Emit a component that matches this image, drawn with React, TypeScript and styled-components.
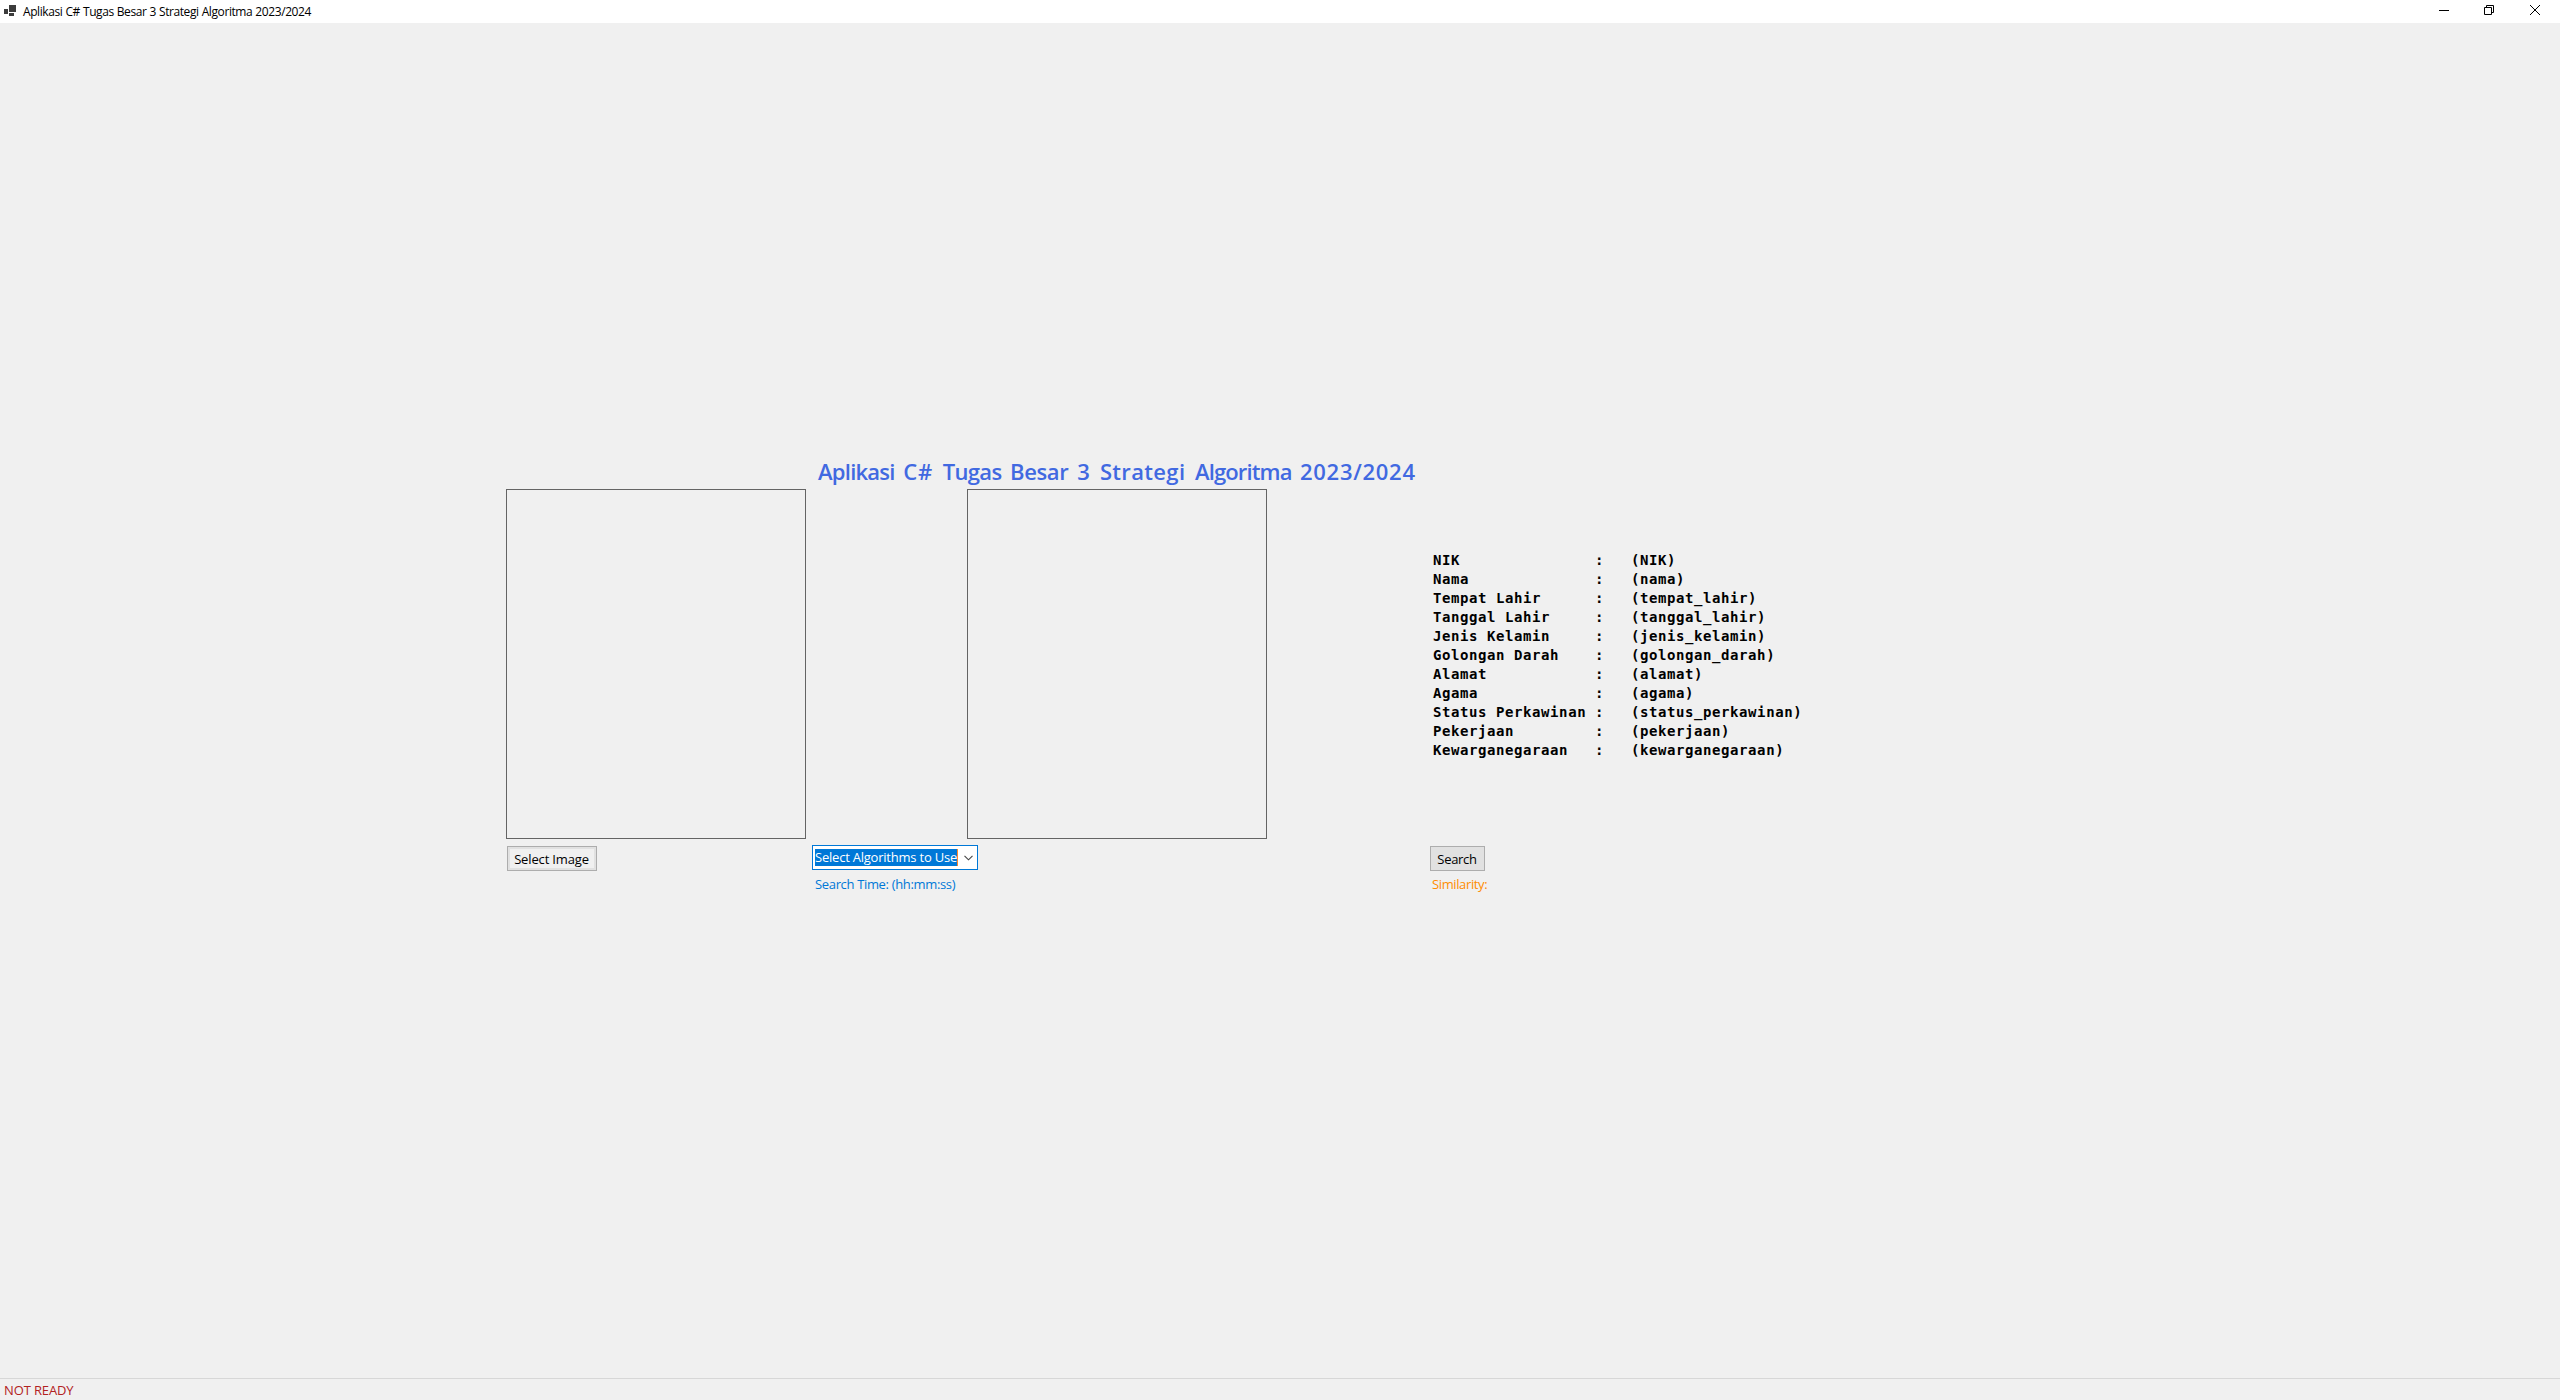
import React from "react";
import styled, { createGlobalStyle } from "styled-components";

const Global = createGlobalStyle`
  * { box-sizing: border-box; }
  html, body { margin: 0; background: #f0f0f0; }
`;

const ui = `"Segoe UI", "Open Sans", "Noto Sans", sans-serif`;

const Window = styled.div`
  display: flex;
  flex-direction: column;
  width: 2560px;
  height: 1400px;
  overflow: hidden;
  background: #f0f0f0;
  font: 13px ${ui};
  color: #000;
  white-space: pre;
`;

const TitleBar = styled.header`
  display: flex;
  align-items: center;
  flex: none;
  height: 23px;
  padding: 0 2px 0 4px;
  background: #fff;
`;

const AppIcon = styled.svg`
  flex: none;
  width: 12px;
  height: 12px;
  margin-top: -1px;
`;

const Caption = styled.span`
  flex: 1;
  margin-left: 7px;
  font-size: 12px;
  line-height: 23px;
  letter-spacing: -0.41px;
  word-spacing: 0.3px;
`;

const WindowButton = styled.button<{ $width?: number }>`
  display: flex;
  align-items: center;
  align-self: flex-start;
  justify-content: center;
  width: ${(p) => p.$width ?? 46}px;
  height: 20px;
  padding: 0;
  border: 0;
  background: none;

  svg {
    display: block;
    width: 10px;
    height: 10px;
  }
`;

const Form = styled.main`
  display: flex;
  flex-direction: column;
  flex: 1;
  padding: 434px 0 0 506px;
`;

const Heading = styled.h1`
  margin: 0 0 0 312px;
  font: 600 22px/29px "Comic Sans MS", "Open Sans", sans-serif;
  word-spacing: 3.6px;
  color: #4169e1;
`;

const Word = styled.span<{ $space: number }>`
  letter-spacing: ${(p) => p.$space}px;
`;

const Panels = styled.section`
  display: grid;
  grid-template-columns: 300px 300px 1fr;
  column-gap: 161px;
  height: 350px;
  margin-top: 3px;
`;

const PictureBox = styled.div`
  border: 1px solid #646464;
`;

const Record = styled.dl`
  display: grid;
  grid-template-columns: 162px 36px auto;
  grid-auto-rows: 19px;
  justify-content: start;
  margin: 62px 0 0 5px;
  font: bold 14px/19px Consolas, "DejaVu Sans Mono", monospace;
  letter-spacing: 0.58px;

  dt, dd { margin: 0; }
`;

const Controls = styled.section`
  display: grid;
  grid-template-columns: 305px 618px auto;
  justify-content: start;
  align-items: start;
  margin: 6px 0 0 1px;
`;

const Column = styled.div<{ $lift?: boolean }>`
  display: flex;
  flex-direction: column;
  align-items: flex-start;
  padding-top: ${(p) => (p.$lift ? 0 : 1)}px;
`;

const Button = styled.button<{ $width: number; $focused?: boolean; $space: number }>`
  width: ${(p) => p.$width}px;
  height: 25px;
  padding: 1px 1px 0 0;
  border: 1px solid #adadad;
  background: ${(p) => (p.$focused ? "#f0f0f0" : "#e1e1e1")};
  box-shadow: ${(p) => (p.$focused ? "inset 0 0 0 2px #e1e1e1" : "none")};
  font: 13px/22px ${ui};
  letter-spacing: ${(p) => p.$space}px;
  color: #000;
`;

const Combo = styled.div`
  display: flex;
  align-items: center;
  justify-content: space-between;
  width: 166px;
  height: 25px;
  padding: 0 4px 1px 2px;
  border: 1px solid #0078d7;
  background: #fff;

  svg {
    width: 9px;
    height: 6px;
    margin-top: 2px;
  }
`;

const Selected = styled.span`
  width: 143px;
  height: 17px;
  border-right: 1px solid #ff8728;
  background: #0078d7;
  color: #fff;
  line-height: 16px;
  letter-spacing: -0.22px;
`;

const Label = styled.div<{ $color: string; $top: number; $left: number; $space: number }>`
  margin: ${(p) => p.$top}px 0 0 ${(p) => p.$left}px;
  line-height: 18px;
  letter-spacing: ${(p) => p.$space}px;
  color: ${(p) => p.$color};
`;

const StatusBar = styled.footer`
  flex: none;
  height: 22px;
  padding-left: 4px;
  border-top: 1px solid #d7d7d7;
  line-height: 23px;
  letter-spacing: -0.13px;
  color: #b22222;
`;

const fields = [
  ["NIK", "(NIK)"],
  ["Nama", "(nama)"],
  ["Tempat Lahir", "(tempat_lahir)"],
  ["Tanggal Lahir", "(tanggal_lahir)"],
  ["Jenis Kelamin", "(jenis_kelamin)"],
  ["Golongan Darah", "(golongan_darah)"],
  ["Alamat", "(alamat)"],
  ["Agama", "(agama)"],
  ["Status Perkawinan", "(status_perkawinan)"],
  ["Pekerjaan", "(pekerjaan)"],
  ["Kewarganegaraan", "(kewarganegaraan)"],
];

const name = "Aplikasi C# Tugas Besar 3 Strategi Algoritma 2023/2024";

// Letter spacing for each word of the heading, in order.
const headingSpacing = [-0.75, 0.66, -0.67, -0.39, 0.37, 0.34, -0.87, 0.72];

export default function App() {
  return (
    <Window>
      <Global />
      <TitleBar>
        <AppIcon viewBox="0 0 12 12" fill="#3c3c3c" shapeRendering="crispEdges">
          <path d="M5 0h7v7H5zM0 4h4v5H0zM5 8h5v3H5z" />
        </AppIcon>
        <Caption>{name}</Caption>
        <WindowButton $width={44} aria-label="Minimize">
          <svg viewBox="0 0 10 10" fill="none" stroke="#000"><path d="M0 5.5h10" /></svg>
        </WindowButton>
        <WindowButton aria-label="Restore">
          <svg viewBox="0 0 10 10" fill="none" stroke="#000">
            <path d="M.5 2.5h7v7h-7zM2.5 2.5v-2h7v7h-2" />
          </svg>
        </WindowButton>
        <WindowButton aria-label="Close">
          <svg viewBox="0 0 10 10" fill="none" stroke="#000"><path d="M0 0l10 10M10 0L0 10" /></svg>
        </WindowButton>
      </TitleBar>
      <Form>
        <Heading>
          {name.split(" ").map((word, i, all) => (
            <Word key={i} $space={headingSpacing[i]}>{i < all.length - 1 ? `${word} ` : word}</Word>
          ))}
        </Heading>
        <Panels>
          <PictureBox />
          <PictureBox />
          <Record>
            {fields.map(([label, value]) => (
              <React.Fragment key={label}>
                <dt>{label}</dt>
                <dd>:</dd>
                <dd>{value}</dd>
              </React.Fragment>
            ))}
          </Record>
        </Panels>
        <Controls>
          <Column>
            <Button $width={90} $focused $space={-0.15}>Select Image</Button>
          </Column>
          <Column $lift>
            <Combo>
              <Selected>Select Algorithms to Use</Selected>
              <svg viewBox="0 0 9 6" fill="none" stroke="#444" strokeWidth="1.1"><path d="M.5 .8l4 4 4-4" /></svg>
            </Combo>
            <Label $color="#0078d7" $top={5} $left={3} $space={-0.34}>Search Time: (hh:mm:ss)</Label>
          </Column>
          <Column>
            <Button $width={55} $space={-0.3}>Search</Button>
            <Label $color="#ff8c00" $top={4} $left={2} $space={-0.38}>Similarity:</Label>
          </Column>
        </Controls>
      </Form>
      <StatusBar>NOT READY</StatusBar>
    </Window>
  );
}
